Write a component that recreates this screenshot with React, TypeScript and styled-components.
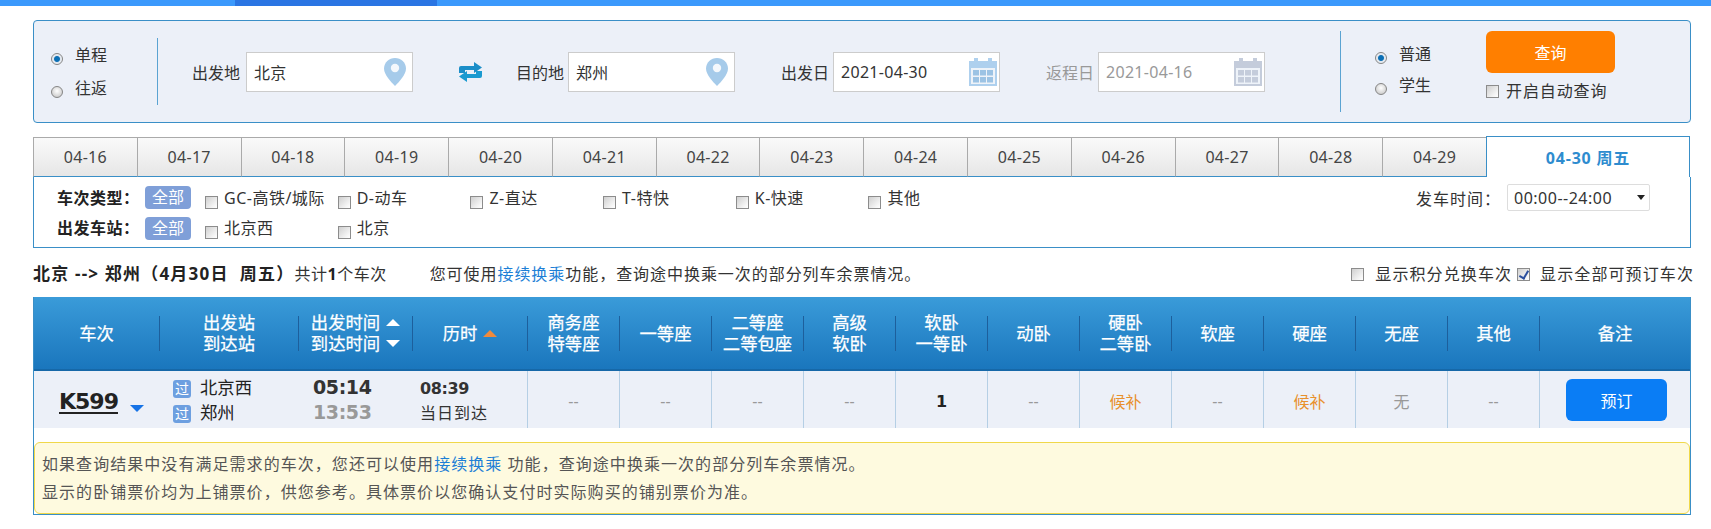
import styled, { createGlobalStyle } from "styled-components";

const GlobalStyle = createGlobalStyle`
  html, body {
    margin: 0;
    background: #fff;
    font-family: "Noto Sans", "Noto Sans CJK SC", sans-serif;
    font-size: 16px;
    color: #333;
  }
  * { box-sizing: border-box; }
`;

const COLUMNS = "125px 139px 114px 115px repeat(11, 92px) 1fr";
const BLUE_LINE = "#3a8fc7";
const BOLD_DIGITS = `"DejaVu Sans", "Noto Sans CJK SC", sans-serif`;

const TopBar = styled.div`
  height: 6px;
  background: #3b99fc;
`;

const TopBarActive = styled.div`
  width: 202px;
  height: 6px;
  margin-left: 235px;
  background: #2a75e3;
`;

const Page = styled.div`
  width: 1691px;
  padding: 14px 0 0 33px;
`;

const SearchPanel = styled.div`
  display: flex;
  align-items: center;
  height: 103px;
  border: 1px solid ${BLUE_LINE};
  border-radius: 4px;
  background: #ecf0f8;
`;

const TripTypes = styled.div`
  width: 123px;
  padding-left: 17px;
  display: flex;
  flex-direction: column;
  gap: 9px;
`;

const Divider = styled.div<{ $height: number }>`
  flex: none;
  width: 1px;
  height: ${(p) => p.$height}px;
  background: #5aa3d2;
`;

const FieldRow = styled.div`
  width: 1182px;
  padding-left: 34px;
  display: flex;
  align-items: center;
`;

const Field = styled.label<{ $offset: number; $muted?: boolean }>`
  display: flex;
  align-items: center;
  margin-left: ${(p) => p.$offset}px;
  color: ${(p) => (p.$muted ? "#999" : "#333")};
`;

const FieldLabel = styled.span<{ $width?: number }>`
  width: ${(p) => p.$width ?? 52}px;
`;

const InputBox = styled.div`
  width: 167px;
  height: 40px;
  margin-top: 1px;
  display: flex;
  align-items: center;
  background: #fff;
  border: 1px solid #ccc;
`;

const TextInput = styled.input`
  flex: 1;
  min-width: 0;
  padding: 0 0 0 7px;
  border: none;
  outline: none;
  background: transparent;
  font: inherit;
  letter-spacing: 0.3px;
  color: inherit;
`;

const SwapButton = styled.div`
  display: flex;
  margin-left: 46px;
`;

const Passengers = styled.div`
  width: 145px;
  margin-top: -5px;
  padding: 0 0 0 34px;
  display: flex;
  flex-direction: column;
  gap: 7px;
`;

const Choice = styled.label`
  display: flex;
  align-items: center;
  gap: 12px;
  height: 24px;
  white-space: nowrap;
  line-height: 24px;
`;

const Radio = styled.input.attrs({ type: "radio" })`
  appearance: none;
  flex: none;
  width: 12px;
  height: 12px;
  margin: 8px 0 0;
  border-radius: 50%;
  border: 1px solid #858585;
  background: radial-gradient(circle at 50% 40%, #fff 0, #cfcfcf 75%);

  &:checked {
    background: radial-gradient(circle, #0b6fb5 0, #0b6fb5 35%, #dfe6ee 50%, #fff 100%);
  }
`;

const Check = styled.input.attrs({ type: "checkbox" })`
  appearance: none;
  position: relative;
  flex: none;
  width: 13px;
  height: 13px;
  margin: 3px 0 0;
  border: 1px solid #8c8c8c;
  background: linear-gradient(135deg, #cfcfcf 0, #f5f5f5 75%, #fff 100%);

  &:checked::after {
    content: "";
    position: absolute;
    left: 3px;
    top: 0;
    width: 4px;
    height: 8px;
    border: solid #2b4f9e;
    border-width: 0 2px 2px 0;
    transform: rotate(30deg);
  }
`;

const QueryColumn = styled.div`
  display: flex;
  flex-direction: column;
  gap: 7px;
  margin-top: -12px;
`;

const QueryButton = styled.button`
  width: 129px;
  height: 42px;
  border: none;
  border-radius: 6px;
  background: #ff7f00;
  color: #fff;
  font: inherit;
`;

const AutoQuery = styled.label`
  display: flex;
  align-items: center;
  gap: 7px;
  height: 20px;
  white-space: nowrap;
  letter-spacing: 0.9px;
`;

const TabStrip = styled.div`
  display: grid;
  grid-template-columns: repeat(14, 1fr) 205px;
  align-items: end;
  height: 41px;
  margin-top: 13px;
`;

const Tab = styled.div<{ $active?: boolean }>`
  display: flex;
  align-items: center;
  justify-content: center;
  height: ${(p) => (p.$active ? 41 : 40)}px;
  margin-right: ${(p) => (p.$active ? 1 : 0)}px;
  border: 1px solid ${(p) => (p.$active ? BLUE_LINE : "#aaa")};
  border-right-width: ${(p) => (p.$active ? 1 : 0)}px;
  border-bottom: ${(p) => (p.$active ? "none" : `1px solid ${BLUE_LINE}`)};
  background: ${(p) => (p.$active ? "#fff" : "linear-gradient(#fafafa, #e6e6e6)")};
  color: ${(p) => (p.$active ? "#2e8ccf" : "#444")};
  font-weight: ${(p) => (p.$active ? 700 : 400)};
  letter-spacing: ${(p) => (p.$active ? 0.8 : 0.3)}px;
`;

const FilterPanel = styled.div`
  height: 71px;
  overflow: hidden;
  padding: 9px 40px 0 23px;
  border: 1px solid ${BLUE_LINE};
  border-top: none;
  display: flex;
  flex-direction: column;
  gap: 7.5px;
`;

const FilterRow = styled.div`
  flex: none;
  display: flex;
  align-items: center;
  height: 23px;
`;

const FilterLabel = styled.span`
  width: 88px;
  padding-bottom: 2px;
  font-weight: 700;
  letter-spacing: 0.5px;
  color: #222;
`;

const AllPill = styled.span`
  flex: none;
  width: 46px;
  height: 23px;
  margin-right: 14px;
  border-radius: 4px;
  background: #7f9fd8;
  color: #fff;
  text-align: center;
  line-height: 22px;
`;

const FilterOption = styled.label`
  width: 132.7px;
  padding-bottom: 2px;
  display: flex;
  align-items: center;
  gap: 6px;
  white-space: nowrap;
  letter-spacing: 0.5px;

  ${Check} {
    margin-top: 11px;
  }
`;

const TimeFilter = styled.div`
  margin-left: auto;
  display: flex;
  align-items: center;
  gap: 6px;
  letter-spacing: 1px;
`;

const TimeSelect = styled.div`
  width: 143px;
  height: 27px;
  padding: 0 4px 0 6px;
  display: flex;
  align-items: center;
  justify-content: space-between;
  border: 1px solid #ddd;
  border-radius: 2px;
  background: #fff;
  letter-spacing: 0.5px;
`;

const Caret = styled.i`
  width: 0;
  height: 0;
  border-left: 4px solid transparent;
  border-right: 4px solid transparent;
  border-top: 5px solid #222;
`;

const InfoRow = styled.div`
  height: 49px;
  display: flex;
  align-items: center;
  justify-content: space-between;
  white-space: nowrap;
`;

const InfoSummary = styled.div`
  display: flex;
  align-items: center;
`;

const RouteTitle = styled.strong`
  font-size: 17px;
  letter-spacing: 1.2px;
  color: #222;
`;

const InfoTotal = styled.span`
  letter-spacing: 0.5px;

  strong {
    color: #222;
  }
`;

const Hint = styled.span`
  margin-left: 43px;
  letter-spacing: 0.95px;
`;

const TextLink = styled.a`
  color: #1d7fd6;
`;

const InfoChecks = styled.div`
  display: flex;
  align-items: center;
  margin-right: -3px;
`;

const InfoCheck = styled.label<{ $gap: number }>`
  display: flex;
  align-items: center;
  gap: ${(p) => p.$gap}px;
  margin-left: 5px;
  letter-spacing: 1.1px;
`;

const Results = styled.div`
  height: 218px;
  border: 1px solid ${BLUE_LINE};
  border-top: none;
`;

const HeaderRow = styled.div`
  display: grid;
  grid-template-columns: ${COLUMNS};
  align-items: center;
  height: 74px;
  border-bottom: 2px solid #1668a8;
  background: linear-gradient(#3a9bd9, #1a76bd);
  color: #fff;
  font-size: 17.33px;
  line-height: 21px;
  -webkit-text-stroke: 0.25px #fff;
`;

const HeaderCell = styled.div<{ $first?: boolean }>`
  display: flex;
  flex-direction: column;
  align-items: center;
  justify-content: center;
  height: 35px;
  border-left: ${(p) => (p.$first ? "none" : "1px solid #1d5f9c")};
  white-space: nowrap;
`;

const SortLine = styled.div`
  display: flex;
  align-items: center;
  gap: 6px;
`;

const SortArrow = styled.i<{ $up?: boolean; $color: string }>`
  width: 0;
  height: 0;
  border-left: 7px solid transparent;
  border-right: 7px solid transparent;
  ${(p) => (p.$up ? "border-bottom" : "border-top")}: 7px solid ${(p) => p.$color};
`;

const TrainRow = styled.div`
  display: grid;
  grid-template-columns: ${COLUMNS};
  height: 57px;
  background: #ecf0f8;
`;

const TrainCell = styled.div`
  display: flex;
  align-items: center;
  gap: 12px;
  padding: 3px 0 0 25px;
`;

const TrainNumber = styled.a`
  font-family: ${BOLD_DIGITS};
  font-weight: 700;
  font-size: 22px;
  letter-spacing: -1px;
  color: #222;
  text-decoration: underline;
  text-underline-offset: 3px;
`;

const ExpandArrow = styled.i`
  width: 0;
  height: 0;
  margin-top: 14px;
  border-left: 7px solid transparent;
  border-right: 7px solid transparent;
  border-top: 7px solid #1673e6;
`;

const StationCell = styled.div`
  padding: 5px 0 0 14px;
  font-size: 17.33px;
  color: #222;
`;

const StationLine = styled.div`
  display: flex;
  align-items: center;
  gap: 9px;
  height: 25px;
`;

const StationName = styled.span`
  padding-bottom: 4px;
`;

const PassBadge = styled.span`
  width: 18px;
  height: 18px;
  border-radius: 3px;
  background: #6d9fe0;
  color: #fff;
  font-size: 14px;
  line-height: 17px;
  text-align: center;
`;

const TimeCell = styled.div<{ $indent: number; $top: number }>`
  padding: ${(p) => p.$top}px 0 0 ${(p) => p.$indent}px;
`;

const TimeLine = styled.div<{ $size?: number; $muted?: boolean; $plain?: boolean }>`
  height: 25px;
  line-height: 25px;
  font-family: ${(p) => (p.$plain ? "inherit" : BOLD_DIGITS)};
  font-weight: ${(p) => (p.$plain ? 400 : 700)};
  font-size: ${(p) => p.$size ?? 16}px;
  letter-spacing: ${(p) => (p.$plain ? "1px" : "-0.4px")};
  color: ${(p) => (p.$muted ? "#999" : "#333")};
`;

const SeatCell = styled.div<{ $color?: string; $bold?: boolean }>`
  display: flex;
  align-items: center;
  justify-content: center;
  padding-top: 3px;
  border-left: 1px solid #b5cfe5;
  color: ${(p) => p.$color ?? "#999"};
  font-family: ${(p) => (p.$bold ? BOLD_DIGITS : "inherit")};
  font-weight: ${(p) => (p.$bold ? 700 : 400)};
`;

const BookCell = styled.div`
  display: flex;
  align-items: center;
  padding-left: 26px;
  border-left: 1px solid #b5cfe5;
`;

const BookButton = styled.button`
  width: 101px;
  height: 42px;
  border: none;
  border-radius: 6px;
  background: #0a7df5;
  color: #fff;
  font: inherit;
`;

const Notice = styled.div`
  height: 72px;
  margin: 14px 0 0;
  padding: 8px 7px;
  border: 1px solid #f0d84a;
  border-radius: 6px;
  background: #fefadf;
  color: #555;
  line-height: 27.5px;
  letter-spacing: 1.05px;
  white-space: nowrap;
`;

const PinIcon = () => (
  <svg width="22" height="28" viewBox="0 0 22 28" style={{ flex: "none", marginRight: 6 }}>
    <path
      d="M11 0C5 0 0 4.6 0 10.6 0 17 7 24 11 28c4-4 11-11 11-17.4C22 4.6 17 0 11 0z"
      fill="#a6cbea"
    />
    <circle cx="11" cy="10" r="4.2" fill="#f4f8fc" />
  </svg>
);

const CalendarIcon = ({ color, dark }: { color: string; dark: string }) => (
  <svg width="28" height="28" viewBox="0 0 28 28" style={{ flex: "none", marginRight: 2 }}>
    <rect x="0" y="3" width="28" height="25" fill={color} />
    <rect x="5" y="0" width="4" height="6" fill={color} />
    <rect x="19" y="0" width="4" height="6" fill={color} />
    <rect x="2" y="10" width="24" height="16" fill="#eef3f9" />
    {[4, 11, 18].map((x) =>
      [12, 19].map((y) => <rect key={`${x}-${y}`} x={x} y={y} width="6" height="5.5" fill={dark} />),
    )}
  </svg>
);

const SwapIcon = () => (
  <svg width="23" height="20" viewBox="0 0 23 20">
    <path d="M2 4h13V0l8 5.5-8 5.5V8H6v3H0V6a2 2 0 0 1 2-2z" fill="#1b8ec8" />
    <path d="M21 16H8v4l-8-5.5L8 9v3h9V9h6v5a2 2 0 0 1-2 2z" fill="#1a9ad0" />
  </svg>
);

const dates = [
  "04-16", "04-17", "04-18", "04-19", "04-20", "04-21", "04-22",
  "04-23", "04-24", "04-25", "04-26", "04-27", "04-28", "04-29",
];

const trainTypes = ["GC-高铁/城际", "D-动车", "Z-直达", "T-特快", "K-快速", "其他"];

const seatHeaders = [
  ["商务座", "特等座"],
  ["一等座"],
  ["二等座", "二等包座"],
  ["高级", "软卧"],
  ["软卧", "一等卧"],
  ["动卧"],
  ["硬卧", "二等卧"],
  ["软座"],
  ["硬座"],
  ["无座"],
  ["其他"],
];

const seats = ["--", "--", "--", "--", "1", "--", "候补", "--", "候补", "无", "--"];

const App = () => {
  return (
    <>
      <GlobalStyle />
      <TopBar>
        <TopBarActive />
      </TopBar>
      <Page>
        <SearchPanel>
          <TripTypes>
            <Choice>
              <Radio name="trip" defaultChecked />
              单程
            </Choice>
            <Choice>
              <Radio name="trip" />
              往返
            </Choice>
          </TripTypes>
          <Divider $height={67} />
          <FieldRow>
            <Field $offset={0}>
              <FieldLabel $width={54}>出发地</FieldLabel>
              <InputBox>
                <TextInput defaultValue="北京" />
                <PinIcon />
              </InputBox>
            </Field>
            <SwapButton>
              <SwapIcon />
            </SwapButton>
            <Field $offset={34}>
              <FieldLabel>目的地</FieldLabel>
              <InputBox>
                <TextInput defaultValue="郑州" />
                <PinIcon />
              </InputBox>
            </Field>
            <Field $offset={46}>
              <FieldLabel>出发日</FieldLabel>
              <InputBox>
                <TextInput defaultValue="2021-04-30" />
                <CalendarIcon color="#aed0ee" dark="#9cc3e4" />
              </InputBox>
            </Field>
            <Field $offset={46} $muted>
              <FieldLabel>返程日</FieldLabel>
              <InputBox>
                <TextInput defaultValue="2021-04-16" disabled />
                <CalendarIcon color="#c4ccdb" dark="#c4ccdb" />
              </InputBox>
            </Field>
          </FieldRow>
          <Divider $height={81} />
          <Passengers>
            <Choice>
              <Radio name="passenger" defaultChecked />
              普通
            </Choice>
            <Choice>
              <Radio name="passenger" />
              学生
            </Choice>
          </Passengers>
          <QueryColumn>
            <QueryButton>查询</QueryButton>
            <AutoQuery>
              <Check />
              开启自动查询
            </AutoQuery>
          </QueryColumn>
        </SearchPanel>

        <TabStrip>
          {dates.map((d) => (
            <Tab key={d}>{d}</Tab>
          ))}
          <Tab $active>04-30 周五</Tab>
        </TabStrip>

        <FilterPanel>
          <FilterRow>
            <FilterLabel>车次类型：</FilterLabel>
            <AllPill>全部</AllPill>
            {trainTypes.map((t) => (
              <FilterOption key={t}>
                <Check />
                {t}
              </FilterOption>
            ))}
            <TimeFilter>
              发车时间：
              <TimeSelect>
                00:00--24:00
                <Caret />
              </TimeSelect>
            </TimeFilter>
          </FilterRow>
          <FilterRow>
            <FilterLabel>出发车站：</FilterLabel>
            <AllPill>全部</AllPill>
            <FilterOption>
              <Check />
              北京西
            </FilterOption>
            <FilterOption>
              <Check />
              北京
            </FilterOption>
          </FilterRow>
          <FilterRow>
            <FilterLabel />
            <AllPill />
          </FilterRow>
        </FilterPanel>

        <InfoRow>
          <InfoSummary>
            <RouteTitle>北京 --&gt; 郑州（4月30日&nbsp;&nbsp;周五）</RouteTitle>
            <InfoTotal>
              共计<strong>1</strong>个车次
            </InfoTotal>
            <Hint>
              您可使用<TextLink>接续换乘</TextLink>功能，查询途中换乘一次的部分列车余票情况。
            </Hint>
          </InfoSummary>
          <InfoChecks>
            <InfoCheck $gap={11}>
              <Check />
              显示积分兑换车次
            </InfoCheck>
            <InfoCheck $gap={10}>
              <Check defaultChecked />
              显示全部可预订车次
            </InfoCheck>
          </InfoChecks>
        </InfoRow>

        <Results>
          <HeaderRow>
            <HeaderCell $first>车次</HeaderCell>
            <HeaderCell>
              <div>出发站</div>
              <div>到达站</div>
            </HeaderCell>
            <HeaderCell>
              <SortLine>
                出发时间
                <SortArrow $up $color="#fff" />
              </SortLine>
              <SortLine>
                到达时间
                <SortArrow $color="#fff" />
              </SortLine>
            </HeaderCell>
            <HeaderCell>
              <SortLine>
                历时
                <SortArrow $up $color="#f08a3c" />
              </SortLine>
            </HeaderCell>
            {seatHeaders.map((lines) => (
              <HeaderCell key={lines.join()}>
                {lines.map((l) => (
                  <div key={l}>{l}</div>
                ))}
              </HeaderCell>
            ))}
            <HeaderCell>备注</HeaderCell>
          </HeaderRow>

          <TrainRow>
            <TrainCell>
              <TrainNumber>K599</TrainNumber>
              <ExpandArrow />
            </TrainCell>
            <StationCell>
              <StationLine>
                <PassBadge>过</PassBadge>
                <StationName>北京西</StationName>
              </StationLine>
              <StationLine>
                <PassBadge>过</PassBadge>
                <StationName>郑州</StationName>
              </StationLine>
            </StationCell>
            <TimeCell $indent={15} $top={4}>
              <TimeLine $size={19}>05:14</TimeLine>
              <TimeLine $size={19} $muted>
                13:53
              </TimeLine>
            </TimeCell>
            <TimeCell $indent={8} $top={5}>
              <TimeLine $size={16}>08:39</TimeLine>
              <TimeLine $plain>当日到达</TimeLine>
            </TimeCell>
            {seats.map((s, i) => (
              <SeatCell
                key={i}
                $bold={s === "1"}
                $color={s === "候补" ? "#e8912d" : s === "1" ? "#222" : undefined}
              >
                {s}
              </SeatCell>
            ))}
            <BookCell>
              <BookButton>预订</BookButton>
            </BookCell>
          </TrainRow>

          <Notice>
            <div>
              如果查询结果中没有满足需求的车次，您还可以使用<TextLink>接续换乘</TextLink> 功能，查询途中换乘一次的部分列车余票情况。
            </div>
            <div>显示的卧铺票价均为上铺票价，供您参考。具体票价以您确认支付时实际购买的铺别票价为准。</div>
          </Notice>
        </Results>
      </Page>
    </>
  );
};

export default App;
